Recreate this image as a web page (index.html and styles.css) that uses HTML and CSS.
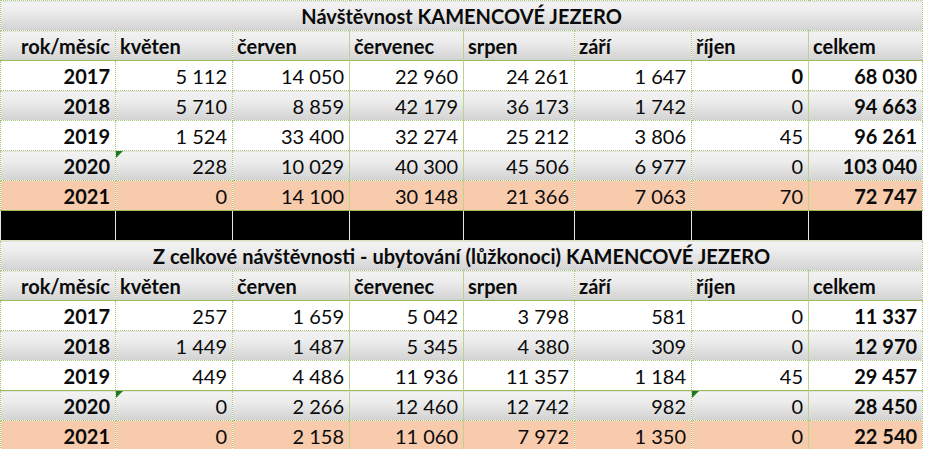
FILE: index.html
```html
<!DOCTYPE html>
<html lang="cs">
<head>
<meta charset="utf-8">
<title>Návštěvnost KAMENCOVÉ JEZERO</title>
<link rel="stylesheet" href="styles.css">
</head>
<body>
<table class="sheet">
  <colgroup>
    <col class="c1"><col class="c2"><col class="c3"><col class="c4"><col class="c5"><col class="c6"><col class="c7"><col class="c8">
  </colgroup>
  <tbody>
    <tr class="grad title"><td colspan="8">Návštěvnost KAMENCOVÉ JEZERO</td></tr>
    <tr class="grad head">
      <td class="year">rok/měsíc</td><td>květen</td><td>červen</td><td class="sv">červenec</td><td class="sv">srpen</td><td>září</td><td>říjen</td><td class="sv">celkem</td>
    </tr>
    <tr class="white firstrow">
      <td class="year">2017</td><td>5 112</td><td>14 050</td><td class="sv">22 960</td><td class="sv">24 261</td><td>1 647</td><td class="b">0</td><td class="sv tot">68 030</td>
    </tr>
    <tr class="grad">
      <td class="year">2018</td><td>5 710</td><td>8 859</td><td class="sv">42 179</td><td class="sv">36 173</td><td>1 742</td><td>0</td><td class="sv tot">94 663</td>
    </tr>
    <tr class="white">
      <td class="year">2019</td><td>1 524</td><td>33 400</td><td class="sv">32 274</td><td class="sv">25 212</td><td>3 806</td><td>45</td><td class="sv tot">96 261</td>
    </tr>
    <tr class="grad">
      <td class="year">2020</td><td class="flag">228</td><td>10 029</td><td class="sv">40 300</td><td class="sv">45 506</td><td>6 977</td><td>0</td><td class="sv tot">103 040</td>
    </tr>
    <tr class="peach">
      <td class="year">2021</td><td>0</td><td>14 100</td><td class="sv">30 148</td><td class="sv">21 366</td><td>7 063</td><td>70</td><td class="sv tot">72 747</td>
    </tr>
    <tr class="black">
      <td></td><td></td><td></td><td></td><td></td><td></td><td></td><td></td>
    </tr>
    <tr class="grad title"><td colspan="8">Z celkové návštěvnosti - ubytování (lůžkonoci) KAMENCOVÉ JEZERO</td></tr>
    <tr class="grad head">
      <td class="year">rok/měsíc</td><td>květen</td><td>červen</td><td class="sv">červenec</td><td class="sv">srpen</td><td>září</td><td>říjen</td><td class="sv">celkem</td>
    </tr>
    <tr class="white firstrow">
      <td class="year">2017</td><td>257</td><td>1 659</td><td class="sv">5 042</td><td class="sv">3 798</td><td>581</td><td>0</td><td class="sv tot">11 337</td>
    </tr>
    <tr class="grad">
      <td class="year">2018</td><td>1 449</td><td>1 487</td><td class="sv">5 345</td><td class="sv">4 380</td><td>309</td><td>0</td><td class="sv tot">12 970</td>
    </tr>
    <tr class="white">
      <td class="year">2019</td><td>449</td><td>4 486</td><td class="sv">11 936</td><td class="sv">11 357</td><td>1 184</td><td>45</td><td class="sv tot">29 457</td>
    </tr>
    <tr class="grad solidtop">
      <td class="year">2020</td><td class="flag">0</td><td>2 266</td><td class="sv">12 460</td><td class="sv">12 742</td><td>982</td><td class="flag">0</td><td class="sv tot">28 450</td>
    </tr>
    <tr class="peach">
      <td class="year">2021</td><td>0</td><td>2 158</td><td class="sv">11 060</td><td class="sv">7 972</td><td>1 350</td><td>0</td><td class="sv tot">22 540</td>
    </tr>
  </tbody>
</table>
</body>
</html>
```

FILE: styles.css
```css
html, body {
  margin: 0;
  padding: 0;
  background: #ffffff;
}

.sheet {
  border-collapse: collapse;
  table-layout: fixed;
  width: 922px;
  font-family: Lato, "Liberation Sans", sans-serif;
  font-size: 20px;
  line-height: 24px;
  color: #0a0a0a;
}

.c1 { width: 115px; }
.c2 { width: 117px; }
.c3 { width: 117px; }
.c4 { width: 114px; }
.c5 { width: 111px; }
.c6 { width: 117px; }
.c7 { width: 117px; }
.c8 { width: 114px; }

.sheet tr {
  height: 30px;
}

.sheet td {
  border: 1px dotted #a9c97a;
  padding: 0 5px 2px 5px;
  vertical-align: bottom;
  text-align: right;
  white-space: nowrap;
  overflow: hidden;
}

.sheet td.sv {
  border-left: 1px solid #b9d48f;
}

.sheet td.year,
.sheet td.tot,
.sheet td.b {
  font-weight: bold;
}

.grad td {
  background: linear-gradient(to bottom, #f3f3f3 0%, #ececec 35%, #d2d2d2 100%);
}

.white td {
  background: #ffffff;
}

.peach td {
  background: #f8cbad;
}

.title td {
  text-align: center;
  font-weight: bold;
}

.head td {
  text-align: left;
  font-weight: bold;
  padding-left: 4px;
}

.head td.year {
  text-align: right;
}

.firstrow td,
.solidtop td {
  border-top: 1px solid #9bbb59;
}

.peach td {
  border-bottom: 1px solid #9bbb59;
}

.black td {
  background: #000000;
  border-top: 1px solid #9bbb59;
  border-bottom: 1px solid #d8e4bc;
  border-left: 1px solid #e6e6e6;
  border-right: 1px solid #e6e6e6;
}

.sheet td.flag {
  position: relative;
}

.sheet td.flag::before {
  content: "";
  position: absolute;
  left: 0;
  top: 0;
  width: 0;
  height: 0;
  border-top: 7px solid #1f7a1f;
  border-right: 7px solid transparent;
}
```
